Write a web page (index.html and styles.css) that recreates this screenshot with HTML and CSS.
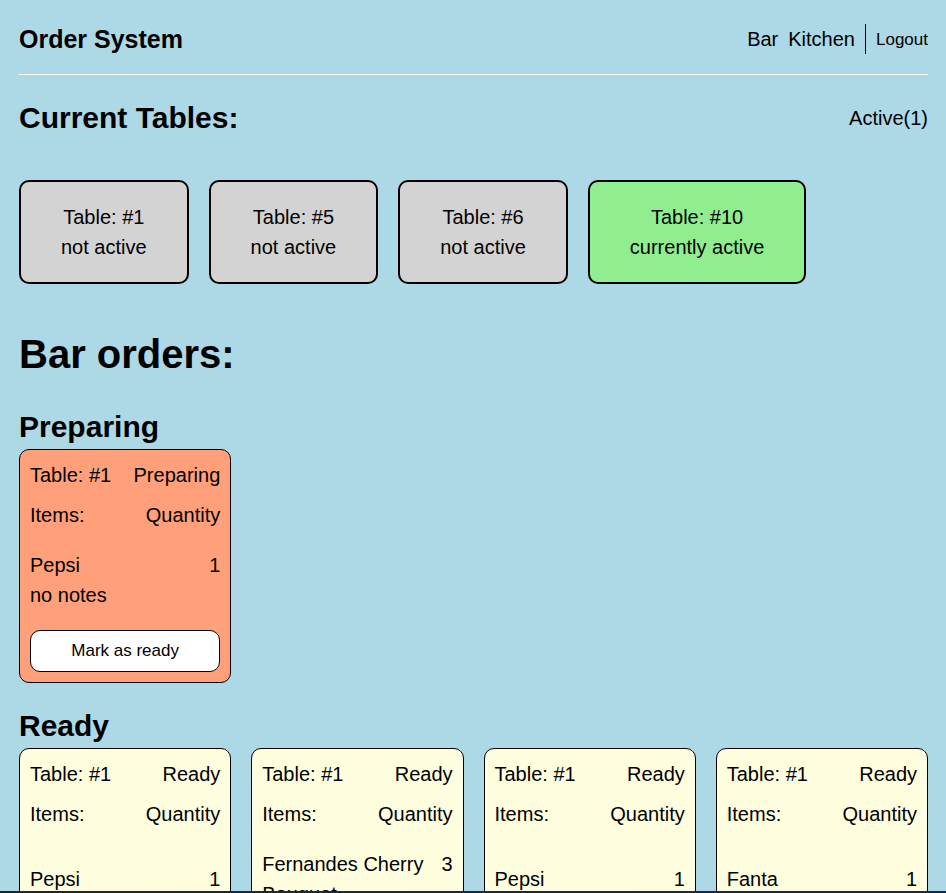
FILE: index.html
```html
<!DOCTYPE html>
<html lang="en">
<head>
<meta charset="utf-8">
<title>Order System</title>
<link rel="stylesheet" href="styles.css">
</head>
<body>
<div class="page">
  <header class="header">
    <h3 class="brand">Order System</h3>
    <nav class="nav">
      <a href="#bar">Bar</a>
      <a href="#kitchen">Kitchen</a>
      <div class="session"><button class="logout" type="button">Logout</button></div>
    </nav>
  </header>
  <main>
    <section class="overview">
      <div class="overview-head">
        <h2>Current Tables:</h2>
        <span>Active(1)</span>
      </div>
      <div class="tables">
        <div class="table"><p>Table: #1</p><p>not active</p></div>
        <div class="table"><p>Table: #5</p><p>not active</p></div>
        <div class="table"><p>Table: #6</p><p>not active</p></div>
        <div class="table active"><p>Table: #10</p><p>currently active</p></div>
      </div>
    </section>
    <section class="orders" id="bar">
      <h1>Bar orders:</h1>
      <section>
        <h2>Preparing</h2>
        <div class="grid">
          <article class="order preparing">
            <div class="rows">
              <div class="row"><span>Table: #1</span><span>Preparing</span></div>
              <div class="row"><span>Items:</span><span>Quantity</span></div>
            </div>
            <div class="items">
              <div class="row"><span>Pepsi</span><span>1</span></div>
              <p>no notes</p>
            </div>
            <button class="action" type="button">Mark as ready</button>
          </article>
        </div>
      </section>
      <section>
        <h2>Ready</h2>
        <div class="grid">
          <article class="order">
            <div class="rows">
              <div class="row"><span>Table: #1</span><span>Ready</span></div>
              <div class="row"><span>Items:</span><span>Quantity</span></div>
            </div>
            <div class="items">
              <div class="row"><span>Pepsi</span><span>1</span></div>
              <p>no notes</p>
            </div>
            <button class="action" type="button">Mark as served</button>
          </article>
          <article class="order">
            <div class="rows">
              <div class="row"><span>Table: #1</span><span>Ready</span></div>
              <div class="row"><span>Items:</span><span>Quantity</span></div>
            </div>
            <div class="items">
              <div class="row"><span>Fernandes Cherry Bouquet</span><span>3</span></div>
              <p>no notes</p>
            </div>
            <button class="action" type="button">Mark as served</button>
          </article>
          <article class="order">
            <div class="rows">
              <div class="row"><span>Table: #1</span><span>Ready</span></div>
              <div class="row"><span>Items:</span><span>Quantity</span></div>
            </div>
            <div class="items">
              <div class="row"><span>Pepsi</span><span>1</span></div>
              <p>no notes</p>
            </div>
            <button class="action" type="button">Mark as served</button>
          </article>
          <article class="order">
            <div class="rows">
              <div class="row"><span>Table: #1</span><span>Ready</span></div>
              <div class="row"><span>Items:</span><span>Quantity</span></div>
            </div>
            <div class="items">
              <div class="row"><span>Fanta</span><span>1</span></div>
              <p>no notes</p>
            </div>
            <button class="action" type="button">Mark as served</button>
          </article>
        </div>
      </section>
    </section>
  </main>
</div>
<footer class="edge"></footer>
</body>
</html>
```
FILE: styles.css
```css
* {
  box-sizing: border-box;
  margin: 0;
  padding: 0;
}

body {
  display: flex;
  flex-direction: column;
  height: 100vh;
  background: lightblue;
  color: #000;
  font: 20px/30px "Liberation Sans", Arial, sans-serif;
}

.page {
  flex: 1;
  min-height: 0;
  overflow-y: auto;
  scrollbar-width: none;
  padding: 24px 18px 20px 19px;
}

.edge {
  flex: none;
  height: 2px;
  background: linear-gradient(to right, #23232b, #1c2547 40%, #1e2458);
}

h1 {
  font-size: 40px;
  line-height: 60px;
}

h2 {
  font-size: 30px;
  line-height: 45px;
}

.header,
.overview-head,
.row {
  display: flex;
  justify-content: space-between;
}

.header {
  align-items: center;
  padding-bottom: 20px;
  border-bottom: 1px solid #fff;
}

.brand {
  font-size: 25px;
  line-height: 30px;
}

.nav {
  display: flex;
  gap: 10px;
}

.nav a {
  color: inherit;
  text-decoration: none;
}

.session {
  display: flex;
  padding: 2px 0 0 10px;
  border-left: 1px solid #000;
}

.logout {
  border: 0;
  background: none;
  color: inherit;
  font: 17px/28px "Liberation Sans", Arial, sans-serif;
  cursor: pointer;
}

.overview {
  padding: 20px 0 40px;
}

.overview-head {
  align-items: center;
  margin-bottom: 40px;
}

.tables {
  display: flex;
  flex-wrap: wrap;
  gap: 20px;
}

.table {
  padding: 20px 40px;
  border: 2px solid #000;
  border-radius: 10px;
  background: lightgray;
  text-align: center;
}

.table.active {
  background: lightgreen;
}

.orders {
  display: flex;
  flex-direction: column;
  gap: 20px;
}

.grid {
  display: grid;
  grid-template-columns: repeat(4, 1fr);
  gap: 20px;
}

.order {
  display: flex;
  flex-direction: column;
  justify-content: space-between;
  gap: 20px;
  padding: 10px;
  border: 1px solid #000;
  border-radius: 10px;
  background: lightyellow;
}

.order.preparing {
  background: lightsalmon;
}

.rows {
  display: flex;
  flex-direction: column;
  gap: 10px;
}

.row {
  gap: 10px;
}

.action {
  padding: 10px;
  border: 1px solid #000;
  border-radius: 10px;
  background: #fff;
  color: #000;
  font: 17px/20px "Liberation Sans", Arial, sans-serif;
  cursor: pointer;
}
```
